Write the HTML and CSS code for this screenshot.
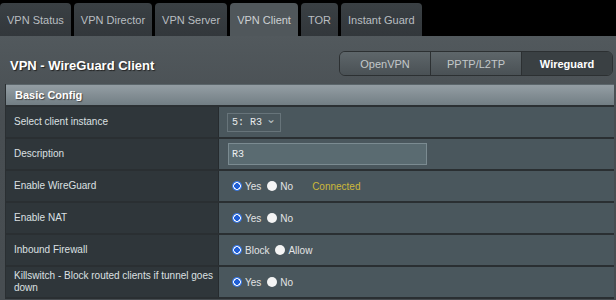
FILE: index.html
```html
<!DOCTYPE html>
<html lang="en">

<head>
  <meta charset="UTF-8">
  <meta name="viewport" content="width=device-width, initial-scale=1.0">
  <title>VPN - WireGuard Client</title>
  <link rel="stylesheet" href="styles.css">
</head>

<body>
  <nav class="tabs">
    <div class="tab">VPN Status</div>
    <div class="tab">VPN Director</div>
    <div class="tab">VPN Server</div>
    <div class="tab active">VPN Client</div>
    <div class="tab">TOR</div>
    <div class="tab">Instant Guard</div>
  </nav>

  <div class="panel">
    <div class="panel-head">
      <h1 class="title">VPN - WireGuard Client</h1>
      <div class="switcher">
        <div class="seg">OpenVPN</div>
        <div class="seg">PPTP/L2TP</div>
        <div class="seg active">Wireguard</div>
      </div>
    </div>

    <div class="config">
      <div class="config-head">Basic Config</div>

      <div class="row">
        <div class="label">Select client instance</div>
        <div class="value">
          <div class="select">5: R3 <span class="chevron">&#8964;</span></div>
        </div>
      </div>

      <div class="row">
        <div class="label">Description</div>
        <div class="value">
          <input class="text-input" type="text" value="R3">
        </div>
      </div>

      <div class="row">
        <div class="label">Enable WireGuard</div>
        <div class="value">
          <label class="radio"><span class="dot checked"></span>Yes</label>
          <label class="radio"><span class="dot"></span>No</label>
          <span class="status">Connected</span>
        </div>
      </div>

      <div class="row">
        <div class="label">Enable NAT</div>
        <div class="value">
          <label class="radio"><span class="dot checked"></span>Yes</label>
          <label class="radio"><span class="dot"></span>No</label>
        </div>
      </div>

      <div class="row">
        <div class="label">Inbound Firewall</div>
        <div class="value">
          <label class="radio"><span class="dot checked"></span>Block</label>
          <label class="radio"><span class="dot"></span>Allow</label>
        </div>
      </div>

      <div class="row">
        <div class="label">Killswitch - Block routed clients if tunnel goes down</div>
        <div class="value">
          <label class="radio"><span class="dot checked"></span>Yes</label>
          <label class="radio"><span class="dot"></span>No</label>
        </div>
      </div>
    </div>
  </div>
</body>

</html>
```

FILE: styles.css
```css
body {
  margin: 0;
  background-color: #000;
  font-family: "Liberation Sans", Arial, sans-serif;
  height: 300px;
  overflow: hidden;
}

/* top tab strip */
.tabs {
  display: flex;
  align-items: flex-end;
  gap: 3px;
  height: 36px;
}

.tab {
  height: 33px;
  padding: 1px 7px 0;
  box-sizing: border-box;
  display: flex;
  align-items: center;
  background: linear-gradient(#3a4044, #32373b);
  color: #b9bec1;
  font-size: 11px;
  border-radius: 4px 4px 0 0;
}

.tab.active {
  background: #50575b;
  color: #cdd1d3;
}

/* main panel */
.panel {
  background: linear-gradient(#52595d, #484e52 80px, #474d51);
  padding: 0 2px 0 5px;
  height: 264px;
}

.panel-head {
  display: flex;
  justify-content: space-between;
  align-items: center;
  padding: 15px 1px 0 5px;
  height: 25px;
}

.title {
  margin: 0;
  padding-top: 4px;
  font-size: 13px;
  font-weight: bold;
  color: #fff;
  text-shadow: 1px 1px 1px #222;
}

.switcher {
  display: flex;
  height: 25px;
  border: 1px solid #2c3032;
  border-radius: 6px;
  overflow: hidden;
  box-sizing: border-box;
}

.seg {
  width: 90px;
  display: flex;
  align-items: center;
  justify-content: center;
  font-size: 11px;
  color: #c3c8ca;
  background: linear-gradient(#5e666a, #4a5155);
  border-left: 1px solid #2c3032;
}

.seg:first-child {
  border-left: none;
}

.seg.active {
  background: #3a4043;
  color: #fff;
  font-weight: bold;
}

/* config table */
.config {
  margin-top: 8px;
  border-left: 1px solid #2a2f32;
}

.config-head {
  height: 23px;
  box-sizing: border-box;
  padding-left: 9px;
  display: flex;
  align-items: center;
  background: linear-gradient(#949ea4, #727e84);
  border-top: 1px solid #5c666b;
  border-bottom: 2px solid #2b3033;
  color: #fff;
  font-size: 11px;
  font-weight: bold;
  text-shadow: 1px 1px 1px #444;
}

.row {
  display: grid;
  grid-template-columns: 213px 1fr;
  height: 32px;
  box-sizing: border-box;
  border-bottom: 2px solid #2a2f32;
}

.label {
  background-color: #2f363a;
  border-right: 1px solid #262b2e;
  color: #dce0e2;
  font-size: 10px;
  line-height: 12px;
  padding: 0 3px 0 8px;
  display: flex;
  align-items: center;
}

.value {
  background-color: #4a575d;
  display: flex;
  align-items: center;
  padding-left: 8px;
  color: #e2e4e5;
  font-size: 10px;
}

.select {
  height: 19px;
  width: 54px;
  box-sizing: border-box;
  border: 1px solid #67747a;
  background-color: #4b585e;
  font-family: "Liberation Mono", monospace;
  font-size: 10px;
  color: #e8eaeb;
  padding-left: 4px;
  display: flex;
  align-items: center;
  gap: 4px;
}

.chevron {
  font-family: "DejaVu Sans", sans-serif;
  font-size: 12px;
  color: #b8c0c4;
  margin-top: -6px;
}

.text-input {
  margin: 0 0 0 1px;
  width: 199px;
  height: 22px;
  box-sizing: border-box;
  border: 1px solid #7b8b91;
  background-color: #5a6b71;
  color: #eceeef;
  font-family: "Liberation Mono", monospace;
  font-size: 10px;
  padding: 0 3px;
  outline: none;
}

.radio {
  display: flex;
  align-items: center;
  margin-left: 5px;
  margin-right: 1px;
}

.dot {
  width: 10px;
  height: 10px;
  border-radius: 50%;
  background-color: #f4f4f4;
  margin-right: 3px;
}

.dot.checked {
  background: radial-gradient(circle, #1f5ed6 0 2.6px, #f0f4fb 3px 3.6px, #3a7ae8 4px);
}

.status {
  margin-left: 18px;
  color: #cdb83a;
}
```
